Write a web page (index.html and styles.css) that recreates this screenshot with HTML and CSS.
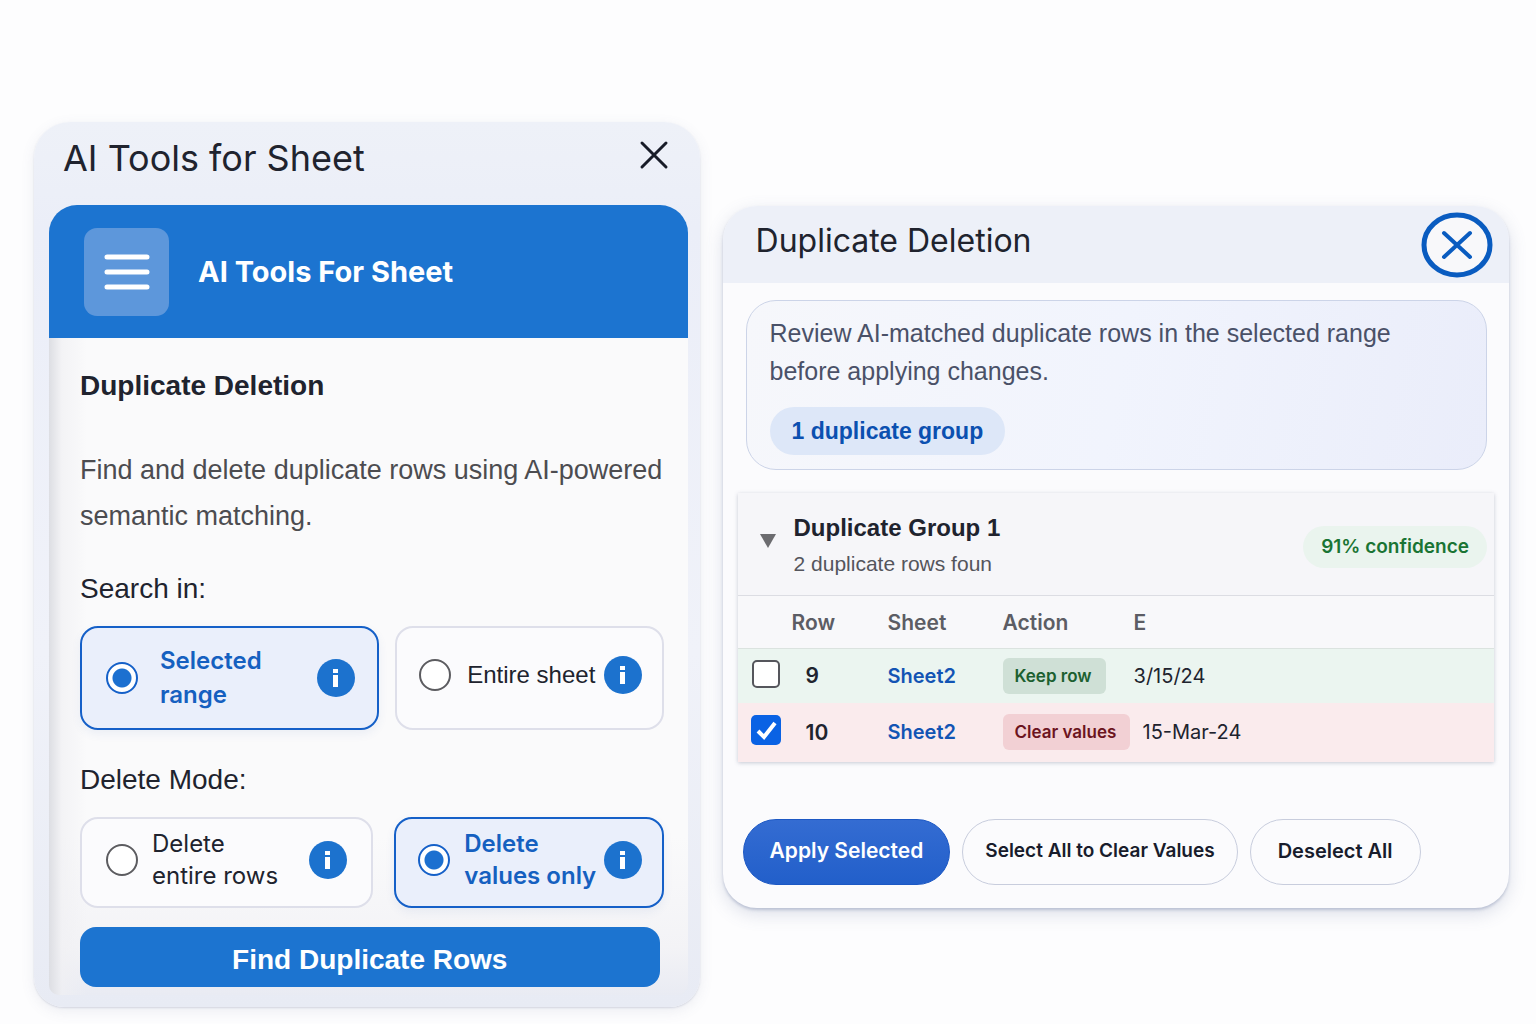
FILE: index.html
```html
<!DOCTYPE html>
<html lang="en">
<head>
    <meta charset="UTF-8">
    <meta name="viewport" content="width=device-width, initial-scale=1.0">
    <title>AI Tools for Sheet</title>
    <link rel="stylesheet" href="styles.css">
</head>
<body>
<main class="page">

    <!-- Sidebar -->
    <section class="panel sidebar">
        <header class="sidebar-header">
            <h1>AI Tools for Sheet</h1>
            <button type="button" class="close-plain" aria-label="Close">
                <svg width="30" height="30" viewBox="0 0 30 30"><path d="M3 3l24 24M27 3L3 27"/></svg>
            </button>
        </header>
        <div class="card">
            <div class="brand">
                <button type="button" class="menu" aria-label="Menu">
                    <svg width="46" height="38" viewBox="0 0 46 38"><path d="M3 4h40M3 19h40M3 34h40"/></svg>
                </button>
                <h2>AI Tools For Sheet</h2>
            </div>
            <form class="tool">
                <h3>Duplicate Deletion</h3>
                <p class="intro">Find and delete duplicate rows using AI-powered semantic matching.</p>

                <h4>Search in:</h4>
                <div class="options search">
                    <div class="option active wide">
                        <input type="radio" name="scope" id="range" checked>
                        <label for="range">Selected<br>range</label>
                        <button type="button" class="info" aria-label="About selected range"><svg width="10" height="20" viewBox="0 0 10 20"><path d="M2 1h5v4H2zM2 7h5v12H2z"/></svg></button>
                    </div>
                    <div class="option single">
                        <input type="radio" name="scope" id="sheet">
                        <label for="sheet">Entire sheet</label>
                        <button type="button" class="info" aria-label="About entire sheet"><svg width="10" height="20" viewBox="0 0 10 20"><path d="M2 1h5v4H2zM2 7h5v12H2z"/></svg></button>
                    </div>
                </div>

                <h4>Delete Mode:</h4>
                <div class="options mode">
                    <div class="option">
                        <input type="radio" name="mode" id="rows">
                        <label for="rows">Delete<br>entire rows</label>
                        <button type="button" class="info" aria-label="About entire rows"><svg width="10" height="20" viewBox="0 0 10 20"><path d="M2 1h5v4H2zM2 7h5v12H2z"/></svg></button>
                    </div>
                    <div class="option active">
                        <input type="radio" name="mode" id="values" checked>
                        <label for="values">Delete<br>values only</label>
                        <button type="button" class="info" aria-label="About values only"><svg width="10" height="20" viewBox="0 0 10 20"><path d="M2 1h5v4H2zM2 7h5v12H2z"/></svg></button>
                    </div>
                </div>

                <button type="button" class="find">Find Duplicate Rows</button>
            </form>
        </div>
    </section>

    <!-- Review dialog -->
    <section class="panel dialog">
        <header class="dialog-header">
            <h2>Duplicate Deletion</h2>
            <button type="button" class="close-round" aria-label="Close">
                <svg width="72" height="66" viewBox="0 0 72 66"><ellipse cx="36" cy="33" rx="33" ry="30"/><path d="M23 21l26 24M49 21L23 45"/></svg>
            </button>
        </header>

        <div class="summary">
            <p>Review AI-matched duplicate rows in the selected range before applying changes.</p>
            <span class="count">1 duplicate group</span>
        </div>

        <div class="group">
            <div class="group-header">
                <svg class="arrow" width="16" height="14" viewBox="0 0 16 14"><path d="M0 0h16L8 14z"/></svg>
                <div class="group-title">
                    <h3>Duplicate Group 1</h3>
                    <p>2 duplicate rows foun</p>
                </div>
                <span class="confidence">91% confidence</span>
            </div>
            <table>
                <thead>
                    <tr><th class="col-check"></th><th class="col-row">Row</th><th class="col-sheet">Sheet</th><th class="col-action">Action</th><th>E</th></tr>
                </thead>
                <tbody>
                    <tr class="keep">
                        <td class="check"><input type="checkbox" aria-label="Row 9"></td>
                        <td class="num">9</td>
                        <td><a href="#">Sheet2</a></td>
                        <td><span class="tag">Keep row</span></td>
                        <td>3/15/24</td>
                    </tr>
                    <tr class="clear">
                        <td class="check"><input type="checkbox" aria-label="Row 10" checked></td>
                        <td class="num">10</td>
                        <td><a href="#">Sheet2</a></td>
                        <td><span class="tag">Clear values</span></td>
                        <td class="shifted">15-Mar-24</td>
                    </tr>
                </tbody>
            </table>
        </div>

        <div class="actions">
            <button type="button" class="apply">Apply Selected</button>
            <button type="button" class="select-all">Select All to Clear Values</button>
            <button type="button">Deselect All</button>
        </div>
    </section>

</main>
</body>
</html>
```
FILE: styles.css
```css
* {
    box-sizing: border-box;
}
body {
    margin: 0;
    background-color: #fdfdfe;
    font-family: 'Inter', 'Liberation Sans', sans-serif;
    color: #20232e;
}
h1, h2, h3, h4, p {
    margin: 0;
}
button {
    font-family: inherit;
    cursor: pointer;
}
.page {
    display: grid;
    grid-template-columns: 666fr 787fr;
    gap: 23px;
    align-items: start;
    padding: 122px 27px 16px 34px;
}

/* Sidebar */
.sidebar {
    padding: 0 12px 12px 15px;
    border-radius: 36px 36px 30px 30px;
    background: linear-gradient(#eef1f8, #ebeef8 12%, #f0f2f9 60%, #e8ebf4);
    box-shadow: 0 1px 2px rgba(90, 100, 140, 0.2), 0 4px 14px rgba(90, 100, 140, 0.1);
}
.sidebar-header {
    display: flex;
    justify-content: space-between;
    align-items: center;
    height: 83px;
    padding: 0 19px 12px 14px;
}
.sidebar-header h1 {
    font-size: 36px;
    font-weight: 400;
    line-height: 44px;
}
.close-plain, .close-round, .menu, .info {
    display: flex;
    justify-content: center;
    align-items: center;
    padding: 0;
    border: none;
    background: none;
}
.close-plain {
    padding-bottom: 5px;
}
.close-plain svg {
    display: block;
    stroke: #181c28;
    stroke-width: 3;
    stroke-linecap: round;
}
.card {
    border-radius: 28px 28px 10px 10px;
    overflow: hidden;
    background: linear-gradient(90deg, #dddee3, rgba(240, 240, 243, 0.7) 2%, rgba(250, 250, 251, 0) 6%),
                linear-gradient(#fafafb 80%, #f3f3f6 94%, #e9ebf3);
}
.brand {
    display: flex;
    align-items: center;
    gap: 29px;
    height: 133px;
    padding-left: 35px;
    background-color: #1c74d0;
}
.menu {
    width: 85px;
    height: 88px;
    border-radius: 13px;
    background-color: #5d97db;
}
.menu svg {
    stroke: #fff;
    stroke-width: 5;
    stroke-linecap: round;
}
.brand h2 {
    color: #fff;
    font-size: 29px;
    font-weight: 700;
}
.tool {
    padding: 32px 24px 8px 31px;
}
.tool h3 {
    font-family: 'Liberation Sans', sans-serif;
    font-size: 28px;
    font-weight: 700;
    line-height: 32px;
}
.intro {
    margin-top: 45px;
    font-family: 'Liberation Sans', sans-serif;
    font-size: 27px;
    line-height: 46px;
    color: #4c4c50;
}
.tool h4 {
    margin-top: 34px;
    font-family: 'Liberation Sans', sans-serif;
    font-size: 28px;
    font-weight: 400;
    line-height: 32px;
}
.options {
    display: grid;
    margin-top: 21px;
}
.search {
    grid-template-columns: minmax(0, 300fr) minmax(0, 269fr);
    gap: 16px;
}
.mode {
    grid-template-columns: minmax(0, 293fr) minmax(0, 269fr);
    gap: 21px;
}
.option {
    display: flex;
    align-items: center;
    padding: 0 20px 6px 22px;
    border: 2px solid #dedfea;
    border-radius: 18px;
    background-color: #fbfbfd;
    font-size: 24px;
    line-height: 32px;
}
.search .option {
    height: 104px;
}
.mode .option {
    height: 91px;
}
.mode .option:first-child {
    padding-left: 24px;
    padding-right: 24px;
}
.option.active {
    border-color: #1560c8;
    background-color: #eaeffb;
    color: #1560c0;
    font-weight: 600;
    box-shadow: 0 4px 10px rgba(60, 100, 180, 0.08);
}
.option.wide {
    padding: 0 22px 0 24px;
    line-height: 34px;
}
.option input {
    appearance: none;
    flex: none;
    width: 32px;
    height: 32px;
    margin: 0;
    border: 2px solid #5c5c60;
    border-radius: 50%;
    background-color: #fff;
}
.option input:checked {
    border-color: #1560c8;
    background: radial-gradient(circle, #1c70d0 9px, #fff 10px);
}
.option label {
    flex: 1;
    padding-left: 14px;
    white-space: nowrap;
}
.option.wide label {
    padding-left: 22px;
}
.option.single label {
    padding-left: 16px;
    font-family: 'Liberation Sans', sans-serif;
}
.info {
    flex: none;
    width: 38px;
    height: 38px;
    border-radius: 50%;
    background-color: #1c72ce;
}
.info svg {
    fill: #fff;
}
.find {
    display: block;
    width: calc(100% - 4px);
    height: 60px;
    margin-top: 19px;
    padding: 5px 0 0;
    border: none;
    border-radius: 16px;
    background-color: #1c74d0;
    color: #fff;
    font-family: 'Liberation Sans', sans-serif;
    font-size: 28px;
    font-weight: 700;
}

/* Review dialog */
.dialog {
    margin-top: 84px;
    padding-bottom: 23px;
    border-radius: 34px;
    background-color: #fbfbfd;
    box-shadow: 0 2px 3px rgba(90, 105, 150, 0.3), 0 6px 18px rgba(90, 105, 150, 0.2);
}
.dialog-header {
    display: flex;
    justify-content: space-between;
    align-items: center;
    height: 77px;
    padding: 0 16px 0 33px;
    border-radius: 34px 34px 0 0;
    background-color: #edf0f8;
}
.dialog-header h2 {
    padding-bottom: 8px;
    font-size: 32px;
    font-weight: 400;
}
.close-round svg {
    fill: none;
    stroke: #0a5cc0;
    stroke-width: 4;
    stroke-linecap: round;
}
.close-round ellipse {
    fill: #f8f8fa;
    stroke-width: 5;
}
.summary {
    margin: 17px 22px 0 23px;
    padding: 13px 80px 14px 23px;
    border: 1px solid #ccd4e8;
    border-radius: 30px;
    background: linear-gradient(100deg, #f6f7fb, #f1f4fd 50%, #eaedfa);
}
.summary p {
    font-family: 'Liberation Sans', sans-serif;
    font-size: 25px;
    line-height: 38px;
    color: #4a5168;
}
.count {
    display: inline-block;
    margin-top: 17px;
    padding: 0 22px;
    border-radius: 24px;
    background-color: #dde7f8;
    color: #0b50b0;
    font-family: 'Liberation Sans', sans-serif;
    font-size: 23px;
    font-weight: 700;
    line-height: 48px;
    vertical-align: top;
}
.group {
    margin: 23px 15px 0;
    background-color: #f8f8fa;
    box-shadow: 0 1px 4px rgba(80, 90, 120, 0.3);
}
.group-header {
    display: flex;
    align-items: center;
    gap: 18px;
    height: 102px;
    padding: 6px 7px 0 22px;
    background-color: #f6f6f9;
}
.arrow {
    margin-bottom: 12px;
    fill: #6c6c70;
}
.group-title {
    flex: 1;
    padding-bottom: 4px;
    font-family: 'Liberation Sans', sans-serif;
}
.group-title h3 {
    font-size: 24px;
    font-weight: 700;
    line-height: 38px;
}
.group-title p {
    font-size: 21px;
    line-height: 34px;
    color: #54555c;
}
.confidence {
    padding: 0 18px;
    border-radius: 21px;
    background-color: #eaf4ee;
    color: #1a7434;
    font-size: 19px;
    font-weight: 600;
    line-height: 42px;
}
table {
    width: 100%;
    border-collapse: collapse;
    table-layout: fixed;
    font-size: 20px;
}
th, td {
    padding: 0;
    text-align: left;
}
th {
    height: 53px;
    border-top: 1px solid #dcdde3;
    color: #5c5d64;
    font-size: 21px;
    font-weight: 600;
}
.col-check {
    width: 54px;
}
.col-row {
    width: 96px;
}
.col-sheet {
    width: 115px;
}
.col-action {
    width: 131px;
}
.keep td {
    height: 54px;
    border-top: 1px solid #dbe3df;
    background-color: #ebf5f0;
}
.clear td {
    height: 59px;
    background-color: #faebed;
}
.check input {
    appearance: none;
    display: block;
    width: 28px;
    height: 28px;
    margin: 0 0 4px 14px;
    border: 2px solid #55565c;
    border-radius: 5px;
    background-color: #fff;
}
.check input:checked {
    width: 30px;
    height: 30px;
    margin-left: 13px;
    border: none;
    background: #0a62e4 url("data:image/svg+xml,%3Csvg xmlns='http://www.w3.org/2000/svg' viewBox='0 0 30 30'%3E%3Cpath d='M7 16l6 6L24 8' fill='none' stroke='white' stroke-width='4'/%3E%3C/svg%3E");
}
td.num {
    padding-left: 14px;
    font-size: 21px;
    font-weight: 600;
}
td a {
    color: #1254b4;
    font-weight: 600;
    text-decoration: none;
}
.tag {
    display: inline-block;
    padding: 0 14px 0 12px;
    border-radius: 6px;
    background-color: #cfe0d6;
    color: #1c6030;
    font-size: 17px;
    font-weight: 600;
    line-height: 36px;
    white-space: nowrap;
}
.clear .tag {
    background-color: #f2d0d4;
    color: #6c1420;
}
td.shifted {
    padding-left: 9px;
}
.actions {
    display: flex;
    gap: 12px;
    margin: 57px 20px 0;
}
.actions button {
    height: 66px;
    padding: 0 27px 2px;
    border: 1px solid #c8cddd;
    border-radius: 33px;
    background-color: #fbfbfd;
    color: #181c2c;
    font-size: 20px;
    font-weight: 600;
    white-space: nowrap;
}
.actions .apply {
    padding: 0 26px 2px;
    border-color: #1c58c4;
    background: linear-gradient(#346cd2, #225fca);
    color: #fff;
    font-size: 21px;
}
.actions .select-all {
    padding: 0 22px 2px;
    font-size: 19px;
}
```
